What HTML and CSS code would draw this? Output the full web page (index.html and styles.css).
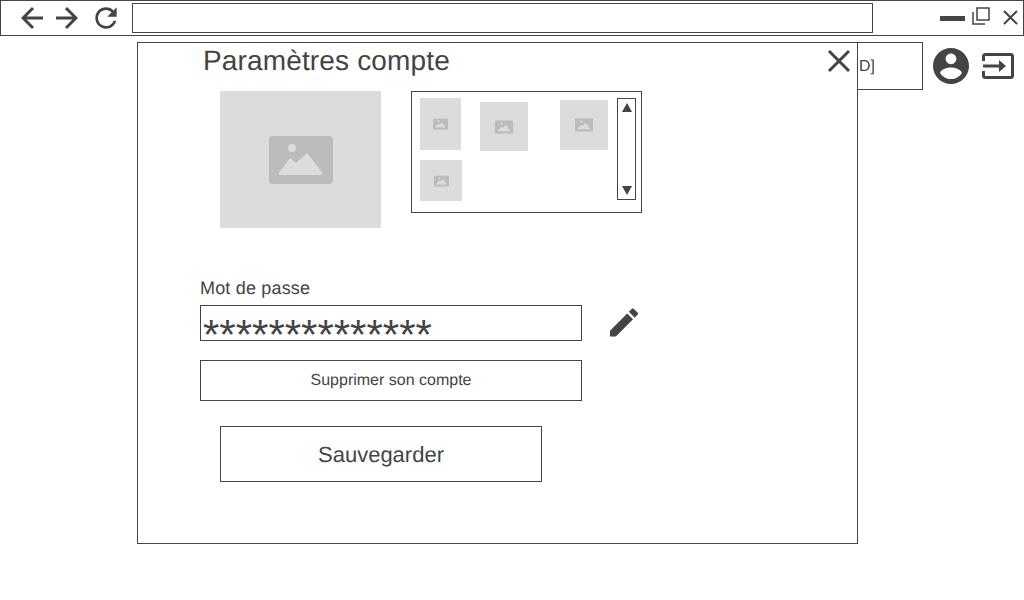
FILE: index.html
```html
<!DOCTYPE html>
<html>

<head>
  <title>Paramètres compte</title>
  <meta name="viewport" content="width=device-width, initial-scale=1.0">
  <link rel="stylesheet" href="styles.css">
</head>

<body>
  <div class="browser-bar">
    <div class="nav-icons">
      <svg class="icon-arrow" viewBox="0 0 24 24"><path d="M22 12H2M12 2 2 12l10 10"/></svg>
      <svg class="icon-arrow" viewBox="0 0 24 24"><path d="M2 12h20M12 2l10 10-10 10"/></svg>
      <svg class="icon-reload" viewBox="0 0 24 24"><path d="M17.65 6.35C16.2 4.9 14.21 4 12 4c-4.42 0-7.99 3.58-7.99 8s3.57 8 7.99 8c3.73 0 6.84-2.55 7.73-6h-2.08c-.82 2.33-3.04 4-5.65 4-3.31 0-6-2.69-6-6s2.69-6 6-6c1.66 0 3.14.69 4.22 1.78L13 11h7V4l-2.35 2.35z"/></svg>
    </div>
    <div class="address"></div>
    <div class="window-icons">
      <div class="win-min"></div>
      <svg class="win-max" viewBox="0 0 18 18"><path d="M5 1h12v12H5zM1 5v12h12"/></svg>
      <svg class="win-close" viewBox="0 0 15 15"><path d="M1 1l13 13M14 1 1 14"/></svg>
    </div>
  </div>

  <div class="page-head">
    <div class="user-button">[ID]</div>
    <svg class="icon-user" viewBox="2 2 20 20"><path d="M12 2C6.480 2 2 6.480 2 12s4.480 10 10 10 10-4.480 10-10S17.520 2 12 2zm0 3c1.660 0 3 1.340 3 3s-1.340 3-3 3-3-1.340-3-3 1.340-3 3-3zm0 14.200c-2.500 0-4.710-1.280-6-3.220.03-1.990 4-3.080 6-3.080 1.990 0 5.970 1.090 6 3.080-1.290 1.940-3.500 3.220-6 3.220z"/></svg>
    <svg class="icon-exit" viewBox="0 0 32 26"><path d="M1.500 8V3.500q0-2 2-2h25q2 0 2 2v19q0 2-2 2h-25q-2 0-2-2V18"/><path d="M1 13h18"/><path class="fill" d="M17 7l7 6-7 6z"/></svg>
  </div>

  <div class="modal">
    <svg class="modal-close" viewBox="0 0 24 24"><path d="M2 2l20 20M22 2 2 22"/></svg>
    <h1 class="modal-title">Paramètres compte</h1>

    <div class="picture-row">
      <div class="picture picture-main">
        <svg class="pic-icon" viewBox="0 0 64 48"><use href="#pic"/></svg>
      </div>
      <div class="gallery">
        <div class="gallery-grid">
          <div class="picture thumb-a"><svg class="pic-small" viewBox="0 0 64 48"><use href="#pic"/></svg></div>
          <div class="picture thumb-b"><svg class="pic-mid" viewBox="0 0 64 48"><use href="#pic"/></svg></div>
          <div class="picture thumb-c"><svg class="pic-mid" viewBox="0 0 64 48"><use href="#pic"/></svg></div>
          <div class="picture thumb-d"><svg class="pic-small" viewBox="0 0 64 48"><use href="#pic"/></svg></div>
        </div>
        <div class="scrollbar">
          <svg class="scroll-arrow" viewBox="0 0 10 9"><path d="M5 0l5 9H0z"/></svg>
          <svg class="scroll-arrow" viewBox="0 0 10 9"><path d="M0 0h10L5 9z"/></svg>
        </div>
      </div>
    </div>

    <div class="form">
      <label class="field-label">Mot de passe</label>
      <div class="password-row">
        <div class="password">**************</div>
        <svg class="icon-edit" viewBox="3 3 18 18"><path d="M3 17.250V21h3.750L17.810 9.940l-3.750-3.750L3 17.250zM20.710 7.040c.39-.39.39-1.020 0-1.410l-2.340-2.340c-.39-.39-1.020-.39-1.410 0l-1.830 1.830 3.750 3.750 1.830-1.830z"/></svg>
      </div>
      <div class="delete-button">Supprimer son compte</div>
      <div class="save-button">Sauvegarder</div>
    </div>
  </div>

  <svg class="defs" width="0" height="0">
    <symbol id="pic" viewBox="0 0 64 48">
      <path fill="#bcbcbc" d="M4 0h56q4 0 4 4v40q0 4-4 4H4q-4 0-4-4V4q0-4 4-4z"/>
      <circle fill="#dcdcdc" cx="23" cy="12" r="4"/>
      <path fill="#dcdcdc" d="M10 37l11-15 6 5 11-10 15 19q1 3-2 3H12q-3 0-2-2z"/>
    </symbol>
  </svg>
</body>

</html>
```

FILE: styles.css
```css
body {
  font-family: "Liberation Sans", Arial, sans-serif;
  color: #444;
  margin: 0;
  padding: 0;
  text-rendering: geometricPrecision;
  will-change: opacity;
}

svg {
  fill: #444;
}

/* browser chrome */
.browser-bar {
  display: flex;
  align-items: center;
  height: 36px;
  box-sizing: border-box;
  border: 1px solid #444;
}

.nav-icons {
  display: flex;
  align-items: center;
  width: 131px;
  padding-left: 20px;
  box-sizing: border-box;
}

.icon-arrow {
  width: 24px;
  height: 24px;
  margin-right: 9px;
}

.icon-arrow path,
.win-max path,
.win-close path,
.modal-close path,
.icon-exit path {
  fill: none;
  stroke: #444;
  stroke-width: 3;
}

.icon-reload {
  width: 32px;
  height: 32px;
  margin-left: 3px;
}

.address {
  width: 741px;
  height: 30px;
  box-sizing: border-box;
  border: 1px solid #444;
}

.window-icons {
  display: flex;
  align-items: center;
  margin-left: 67px;
}

.win-min {
  width: 25px;
  height: 5px;
  background: #444;
  margin-top: 1px;
}

.win-max {
  width: 18px;
  height: 18px;
  margin: -4px 0 0 7px;
}

.win-max path {
  stroke-width: 1.500;
}

.win-close {
  width: 15px;
  height: 15px;
  margin: -2px 0 0 13px;
}

.win-close path {
  stroke-width: 2;
}

/* page behind the dialog */
.page-head {
  display: flex;
  align-items: center;
  justify-content: flex-end;
  height: 48px;
  margin-top: 6px;
}

.user-button {
  width: 140px;
  height: 48px;
  line-height: 47px;
  box-sizing: border-box;
  border: 1px solid #444;
  padding-right: 47px;
  font-size: 16px;
  text-align: right;
}

.icon-user {
  width: 36px;
  height: 36px;
  margin-left: 10px;
}

.icon-exit {
  width: 32px;
  height: 26px;
  margin: 0 10px 0 13px;
}

.icon-exit .fill {
  fill: #444;
  stroke: none;
}

/* dialog */
.modal {
  position: absolute;
  left: 137px;
  top: 42px;
  width: 721px;
  height: 502px;
  box-sizing: border-box;
  border: 1px solid #444;
  background: #fff;
}

.modal-close {
  position: absolute;
  left: 689px;
  top: 6px;
  width: 24px;
  height: 24px;
}

.modal-title {
  font-size: 28px;
  font-weight: normal;
  line-height: 36px;
  letter-spacing: 0.15px;
  margin: 0 0 12px 65px;
  height: 36px;
}

.picture-row {
  display: flex;
  align-items: flex-start;
  gap: 30px;
  margin-left: 82px;
}

.picture {
  display: flex;
  align-items: center;
  justify-content: center;
  background: #dcdcdc;
}

.picture-main {
  width: 161px;
  height: 137px;
}

.pic-icon {
  width: 64px;
  height: 48px;
}

.pic-small {
  width: 15px;
  height: 12px;
}

.pic-mid {
  width: 18px;
  height: 14px;
}

.gallery {
  position: relative;
  width: 231px;
  height: 122px;
  box-sizing: border-box;
  border: 1px solid #444;
}

.gallery-grid {
  display: grid;
  grid-template-columns: 60px 80px 48px;
  grid-auto-rows: 62px;
  padding: 6px 0 0 8px;
}

.thumb-a {
  width: 41px;
  height: 52px;
}

.thumb-b {
  width: 48px;
  height: 49px;
  margin-top: 4px;
}

.thumb-c {
  width: 48px;
  height: 50px;
  margin-top: 2px;
}

.thumb-d {
  width: 42px;
  height: 41px;
}

.scrollbar {
  position: absolute;
  left: 205px;
  top: 6px;
  width: 19px;
  height: 102px;
  box-sizing: border-box;
  border: 1px solid #444;
  display: flex;
  flex-direction: column;
  align-items: center;
  justify-content: space-between;
  padding: 4px 0;
}

.scroll-arrow {
  width: 10px;
  height: 9px;
}

/* form */
.form {
  margin: 49px 0 0 62px;
}

.field-label {
  display: block;
  font-size: 18px;
  line-height: 22px;
  letter-spacing: 0.18px;
  margin-bottom: 6px;
}

.password-row {
  display: flex;
  align-items: center;
  gap: 28px;
}

.password {
  width: 382px;
  height: 36px;
  box-sizing: border-box;
  border: 1px solid #444;
  font-size: 42px;
  line-height: 58px;
  padding-left: 2px;
  white-space: nowrap;
}

.icon-edit {
  width: 28px;
  height: 29px;
  margin-top: -2px;
}

.delete-button {
  width: 382px;
  height: 41px;
  line-height: 39px;
  box-sizing: border-box;
  border: 1px solid #444;
  margin-top: 19px;
  font-size: 16px;
  text-align: center;
}

.save-button {
  width: 322px;
  height: 56px;
  line-height: 56px;
  box-sizing: border-box;
  border: 1px solid #444;
  margin: 25px 0 0 20px;
  font-size: 22px;
  text-align: center;
}

.defs {
  position: absolute;
}
```
